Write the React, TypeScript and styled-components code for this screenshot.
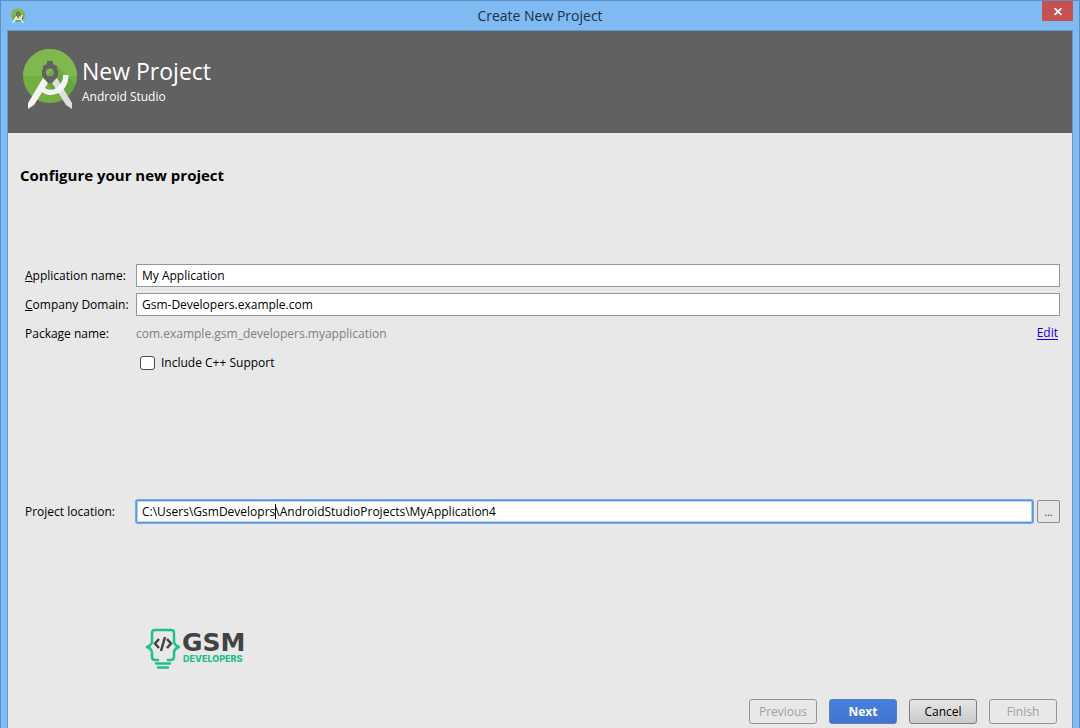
import React, { useLayoutEffect, useRef, useState } from "react";
import styled, { createGlobalStyle, css } from "styled-components";

const UI_FONT = '"Open Sans", "Noto Sans", sans-serif';

const GlobalStyle = createGlobalStyle`
  *, *::before, *::after { box-sizing: border-box; }
  body { margin: 0; background: #e8e8e8; }
  button, input { font: inherit; }
`;

const Window = styled.div`
  display: flex;
  flex-direction: column;
  min-height: 100vh;
  padding: 0 6px;
  background: #7fbaf2;
  border: solid #5a90c4;
  border-width: 1px 1px 0;
  font: 12px/16px ${UI_FONT};
  color: #000;
`;

const TitleBar = styled.header`
  display: grid;
  grid-template-columns: 1fr auto 1fr;
  align-items: center;
  height: 29px;
`;

const TitleIcon = styled.span`
  display: flex;
  padding-left: 4px;
`;

const Title = styled.span`
  font-size: 14px;
  line-height: 20px;
  color: #1c3046;
`;

const CloseButton = styled.button`
  display: flex;
  align-items: center;
  justify-content: center;
  justify-self: end;
  align-self: start;
  width: 31px;
  height: 20px;
  padding: 0;
  border: 0;
  background: #c75050;
`;

const Client = styled.div`
  display: flex;
  flex-direction: column;
  flex: 1;
  border: solid #6098cc;
  border-width: 1px 1px 0;
  background: #e8e8e8;
`;

const Banner = styled.div`
  display: flex;
  align-items: flex-start;
  gap: 4px;
  height: 102px;
  padding: 16px 14px;
  background: #616161;
  color: #fff;
`;

const BannerText = styled.div`
  display: flex;
  flex-direction: column;
  padding-top: 8px;
`;

const BannerTitle = styled.h1`
  margin: 0 0 2px;
  font-size: 23px;
  line-height: 32px;
  font-weight: 400;
`;

const Main = styled.form`
  display: flex;
  flex-direction: column;
  flex: 1;
`;

const Heading = styled.h2`
  margin: 32px 12px 78px;
  font-size: 15px;
  line-height: 21px;
  font-weight: 700;
`;

const Fields = styled.div`
  display: grid;
  grid-template-columns: 105px minmax(0, 1fr);
  column-gap: 6px;
  row-gap: 6px;
  align-items: center;
  grid-auto-rows: 23px;
  padding: 0 12px 0 17px;
`;

const FieldLabel = styled.label`
  white-space: nowrap;
`;

const TextInput = styled.input<{ $focused?: boolean }>`
  width: 100%;
  height: 23px;
  padding: 0 5px;
  border: 1px solid #969696;
  background: #fff;
  color: #000;
  outline: none;
  ${(p) =>
    p.$focused &&
    css`
      border-color: #5c97dc;
      border-radius: 2px;
      box-shadow: 0 0 0 1px #78a9e6, inset 0 0 0 1px #b4d2f5;
    `}
`;

const PackageRow = styled.div`
  display: flex;
  justify-content: space-between;
  padding-right: 2px;
`;

const PackageName = styled.output`
  color: #808080;
`;

const EditLink = styled.a`
  color: #1500d8;
  line-height: 14px;
  text-underline-offset: 2px;
`;

const CheckRow = styled.label`
  display: flex;
  grid-column: 2;
  align-items: center;
  gap: 6px;
  padding-left: 4px;
`;

const CheckBox = styled.input`
  appearance: none;
  width: 15px;
  height: 14px;
  margin: 0;
  border: 1px solid #4c4c4c;
  border-radius: 3px;
  background: #fff;
  &:checked { background: #4a7fd8; }
`;

const LocationFields = styled(Fields)`
  margin-top: 126px;
`;

const LocationRow = styled.div`
  display: flex;
  gap: 4px;
`;

const CaretField = styled.div`
  position: relative;
  flex: 1;
`;

const Caret = styled.span`
  position: absolute;
  top: 4px;
  width: 1px;
  height: 15px;
  background: #000;
`;

const BrowseButton = styled.button`
  width: 23px;
  height: 23px;
  padding: 0;
  border: 1px solid #8c8c8c;
  border-radius: 2px;
  background: #e6e6e6;
  font-size: 10px;
  line-height: 12px;
  color: #333;
`;

const Sponsor = styled.div`
  display: flex;
  margin: 105px 0 24px 137px;
`;

const Actions = styled.footer`
  display: flex;
  justify-content: flex-end;
  gap: 12px;
  margin-top: auto;
  padding: 0 15px 4px;
`;

const ActionButton = styled.button<{ $primary?: boolean }>`
  width: 68px;
  height: 25px;
  padding: 0;
  border: 1px solid #7d7d7d;
  border-radius: 3px;
  background: linear-gradient(#e6e6e6, #c9c9c9);
  color: #000;
  &:disabled {
    border-color: #949494;
    background: #e8e8e8;
    color: #a0a0a0;
  }
  ${(p) =>
    p.$primary &&
    css`
      border-color: #5d7fb4;
      background: linear-gradient(#4680dc, #4274cf);
      color: #fff;
      font-weight: 700;
    `}
`;

function StudioLogo({ width, height }: { width: number; height: number }) {
  return (
    <svg width={width} height={height} viewBox="0 0 56 64" aria-hidden="true">
      <defs>
        <clipPath id="disc">
          <circle cx="28" cy="29" r="27" />
        </clipPath>
      </defs>
      <circle cx="28" cy="29" r="27" fill="#73b043" />
      <path d="M1 29a27 27 0 0 1 54 0z" fill="#7fb84f" />
      <path d="M34 18L55 39V54H41L22 33z" fill="#4d8128" opacity=".28" clipPath="url(#disc)" />
      <path d="M30 36L35 31L50 56V62L44 58z" fill="#dedede" />
      <path d="M26 36L21 31L6 56V62L12 58z" fill="#f4f4f4" />
      <path d="M18 40C28 51 43 44 44 28" fill="none" stroke="#f4f4f4" strokeWidth="5.500" />
      <path
        fill="#616161"
        fillRule="evenodd"
        d="M25 14h6v3l4 2v3l1 2v5l-4 4-2 3h-4l-2-3-4-4v-5l1-2v-3l4-2zM28 21.500a4 4 0 1 0 0 8 4 4 0 0 0 0-8z"
      />
    </svg>
  );
}

function GsmLogo() {
  return (
    <svg width="104" height="44" viewBox="0 0 104 44" role="img" aria-label="GSM Developers">
      <g fill="none" stroke="#1fbf8f" strokeWidth="2.500" strokeLinejoin="round" strokeLinecap="round">
        <path d="M13 32H10Q7 32 7 29V24Q6 20 2 19Q6 18 7 14V5Q7 2 10 2H26Q29 2 29 5V14Q30 18 34 19Q30 20 29 24V29Q29 32 26 32H23" />
        <path d="M11 35.500H25M13 39.500H23" />
      </g>
      <g fill="none" stroke="#424242" strokeWidth="2.500">
        <path d="M14 11L10 15.500L14 20M22 11L26 15.500L22 20M20 9L16 23" />
      </g>
      <text x="37" y="23" fontFamily="DejaVu Sans, sans-serif" fontWeight="700" fontSize="25" fill="#424242">
        GSM
      </text>
      <text x="38" y="34" fontFamily="Inter, sans-serif" fontWeight="800" fontSize="9" fill="#1fbf8f">
        DEVELOPERS
      </text>
    </svg>
  );
}

const LOCATION = "C:\\Users\\GsmDeveloprs\\AndroidStudioProjects\\MyApplication4";
const CARET_INDEX = LOCATION.indexOf("\\Android");

function LocationInput() {
  const ref = useRef<HTMLInputElement>(null);
  const [value, setValue] = useState(LOCATION);
  const [caretX, setCaretX] = useState(0);

  useLayoutEffect(() => {
    const input = ref.current;
    const context = document.createElement("canvas").getContext("2d");
    if (!input || !context) return;
    const style = getComputedStyle(input);
    context.font = `${style.fontSize} ${style.fontFamily}`;
    const start = parseFloat(style.paddingLeft) + parseFloat(style.borderLeftWidth);
    setCaretX(Math.round(start + context.measureText(LOCATION.slice(0, CARET_INDEX)).width));
  }, []);

  return (
    <CaretField>
      <TextInput id="location" ref={ref} $focused spellCheck={false} value={value} onChange={(e) => setValue(e.target.value)} />
      {value === LOCATION && <Caret style={{ left: caretX }} />}
    </CaretField>
  );
}

export default function App() {
  return (
    <>
      <GlobalStyle />
      <Window>
        <TitleBar>
          <TitleIcon>
            <StudioLogo width={14} height={16} />
          </TitleIcon>
          <Title>Create New Project</Title>
          <CloseButton type="button" aria-label="Close">
            <svg width="8" height="7" viewBox="0 0 8 7">
              <path d="M0.500 0L7.500 7M7.500 0L0.500 7" stroke="#fff" strokeWidth="1.800" />
            </svg>
          </CloseButton>
        </TitleBar>
        <Client>
          <Banner>
            <StudioLogo width={56} height={64} />
            <BannerText>
              <BannerTitle>New Project</BannerTitle>
              <span>Android Studio</span>
            </BannerText>
          </Banner>
          <Main onSubmit={(e) => e.preventDefault()}>
            <Heading>Configure your new project</Heading>
            <Fields>
              <FieldLabel htmlFor="app-name">
                <u>A</u>pplication name:
              </FieldLabel>
              <TextInput id="app-name" defaultValue="My Application" spellCheck={false} />
              <FieldLabel htmlFor="domain">
                <u>C</u>ompany Domain:
              </FieldLabel>
              <TextInput id="domain" defaultValue="Gsm-Developers.example.com" spellCheck={false} />
              <FieldLabel htmlFor="package">Package name:</FieldLabel>
              <PackageRow>
                <PackageName id="package">com.example.gsm_developers.myapplication</PackageName>
                <EditLink href="#package">Edit</EditLink>
              </PackageRow>
              <CheckRow>
                <CheckBox type="checkbox" />
                Include C++ Support
              </CheckRow>
            </Fields>
            <LocationFields>
              <FieldLabel htmlFor="location">Project location:</FieldLabel>
              <LocationRow>
                <LocationInput />
                <BrowseButton type="button" aria-label="Browse">...</BrowseButton>
              </LocationRow>
            </LocationFields>
            <Sponsor>
              <GsmLogo />
            </Sponsor>
            <Actions>
              <ActionButton type="button" disabled>Previous</ActionButton>
              <ActionButton type="submit" $primary>Next</ActionButton>
              <ActionButton type="button">Cancel</ActionButton>
              <ActionButton type="button" disabled>Finish</ActionButton>
            </Actions>
          </Main>
        </Client>
      </Window>
    </>
  );
}
